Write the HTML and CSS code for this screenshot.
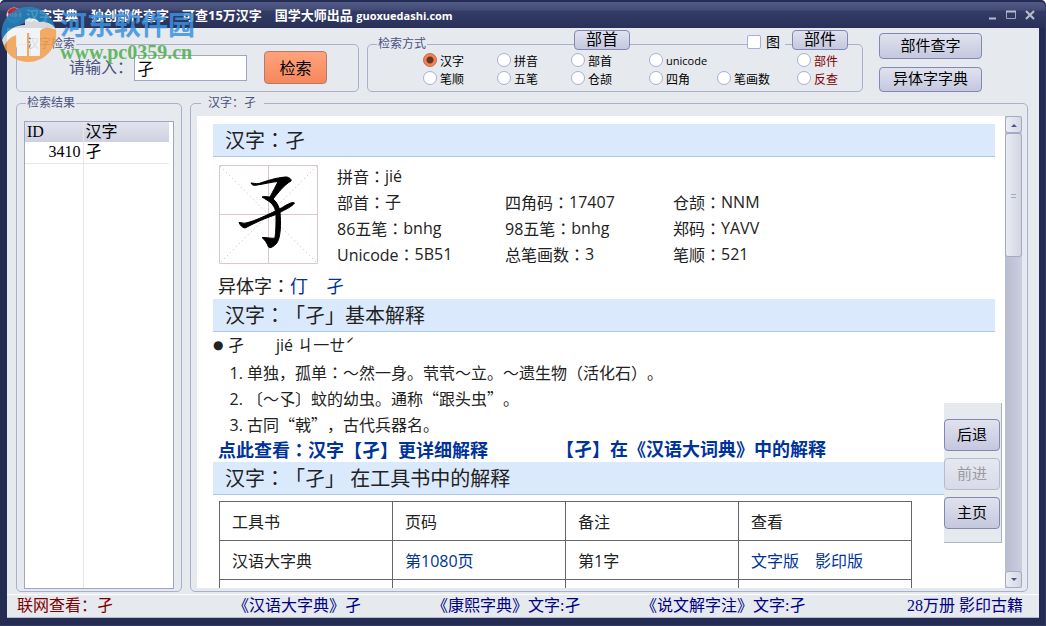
FILE: index.html
```
<!DOCTYPE html>
<html lang="zh-CN">
<head>
<meta charset="utf-8">
<title>汉字宝典</title>
<link rel="stylesheet" href="styles.css">
</head>
<body>
<div class="window">
  <header class="titlebar">
    <svg class="app-icon" viewBox="0 0 16 16"><circle cx="8" cy="8" r="7.5" fill="#d8dbe6"/><path d="M1.500 6a6.700 6.700 0 0 1 13 0z" fill="#d3202c"/><path d="M1.500 10a6.700 6.700 0 0 0 13 0z" fill="#3858a8"/><path d="M3 6v4h1.500l1-1v-2l-1-1zM7 6h2M7 8h2M7 10h2M10.500 6l3 4M13.500 6l-3 4" fill="none" stroke="#b31a2c" stroke-width="1.200"/></svg>
    <h1>汉字宝典　独创部件查字　可查15万汉字　国学大师出品 <span>guoxuedashi.com</span></h1>
    <div class="win-buttons">
      <button type="button" aria-label="最小化"><svg viewBox="0 0 12 12"><path d="M3 9.500h7" stroke="#b6bccf" stroke-width="2"/></svg></button>
      <button type="button" aria-label="最大化"><svg viewBox="0 0 12 12"><path d="M1.500 2.500h9v7h-9z" fill="none" stroke="#9da5bf"/><path d="M1 2.500h10" stroke="#b6bccf" stroke-width="2"/></svg></button>
      <button type="button" aria-label="关闭"><svg viewBox="0 0 12 12"><path d="M2 2l8 8M10 2l-8 8" stroke="#b6bccf" stroke-width="2.200"/></svg></button>
    </div>
  </header>

  <div class="client">
    <form class="toolbar">
      <fieldset class="group search">
        <legend>汉字检索</legend>
        <div class="search-row">
          <label for="q">请输入：</label>
          <input id="q" type="text" value="孑">
          <button type="button" class="primary">检索</button>
        </div>
      </fieldset>
      <fieldset class="group modes">
        <legend>检索方式</legend>
        <div class="mode-grid">
          <label><input type="radio" name="mode" checked>汉字</label>
          <label><input type="radio" name="mode">拼音</label>
          <label><input type="radio" name="mode">部首</label>
          <label class="span2 latin"><input type="radio" name="mode">unicode</label>
          <label class="red"><input type="radio" name="mode">部件</label>
          <label><input type="radio" name="mode">笔顺</label>
          <label><input type="radio" name="mode">五笔</label>
          <label><input type="radio" name="mode">仓颉</label>
          <label><input type="radio" name="mode">四角</label>
          <label><input type="radio" name="mode">笔画数</label>
          <label class="red"><input type="radio" name="mode">反查</label>
        </div>
        <button type="button" class="btn edge radical">部首</button>
        <label class="pic"><input type="checkbox">图</label>
        <button type="button" class="btn edge part">部件</button>
      </fieldset>
      <div class="side-buttons">
        <button type="button" class="btn">部件查字</button>
        <button type="button" class="btn">异体字字典</button>
      </div>
    </form>

    <main class="panes">
      <fieldset class="group results">
        <legend>检索结果</legend>
        <div class="list">
          <table>
            <thead><tr><th>ID</th><th>汉字</th></tr></thead>
            <tbody><tr><td>3410</td><td>孑</td></tr><tr class="rest"><td></td><td></td></tr></tbody>
          </table>
        </div>
      </fieldset>
      <fieldset class="group detail">
        <legend>汉字：孑</legend>
        <div class="browser">
          <article class="page">
            <h2>汉字<span class="mid">：</span>孑</h2>
            <section class="facts">
              <svg class="glyph" viewBox="0 0 99 99"><path d="M.5.5h98v98h-98zM49.500 0v99M0 49.500h99" fill="none" stroke="#d8c8ce"/><path d="M1 1l97 97M98 1l-97 97" stroke="#d8c8ce" stroke-dasharray="1.400 2.800"/><path class="ink" d="M32 18c1 2 2 2.500 5 2.200C45 19 53 17 59 16.500C57 21 54 26 51 32C49 32 45 31 43 32C46 34 50 36 52 38C54 40 56 43 56.500 46C48 50 36 56 27 58C24 58.800 22 57 20 57.500C21 60 23 62.500 26 63C29 62 31 60 34 59C42 55 50 52 57 49.500C57 58 57 66 56 73C53 74 47 72 43 72.500C46 75 48 78 49.500 82C51 84 55 81 57 79C62 74 62 57 61 47.500C65 45 73 42 75.500 38C73 36 66 41 60.500 44C59 40 57 36 54 34C59 28 65 20 72 16C73 14 69 11.500 66 12C58 12.500 47 16 40 18.500C37 19 34 18 32 18z"/></svg>
              <dl>
                <div class="wide"><dt>拼音<span class="mid">：</span></dt><dd>jié</dd></div>
                <div><dt>部首<span class="mid">：</span></dt><dd>子</dd></div>
                <div><dt>四角码<span class="mid">：</span></dt><dd>17407</dd></div>
                <div><dt>仓颉<span class="mid">：</span></dt><dd>NNM</dd></div>
                <div><dt>86五笔<span class="mid">：</span></dt><dd>bnhg</dd></div>
                <div><dt>98五笔<span class="mid">：</span></dt><dd>bnhg</dd></div>
                <div><dt>郑码<span class="mid">：</span></dt><dd>YAVV</dd></div>
                <div><dt>Unicode<span class="mid">：</span></dt><dd>5B51</dd></div>
                <div><dt>总笔画数<span class="mid">：</span></dt><dd>3</dd></div>
                <div><dt>笔顺<span class="mid">：</span></dt><dd>521</dd></div>
              </dl>
            </section>
            <p class="variants">异体字<span class="mid">：</span><a href="#">仃</a>　<a href="#">孑</a></p>
            <h2>汉字<span class="mid">：</span>「孑」基本解释</h2>
            <p class="reading"><span class="dot">●</span>孑　　jié ㄐ一ㄝˊ</p>
            <ol>
              <li>单独，孤单<span class="mid">：</span>～然一身。茕茕～立。～遗生物（活化石）。</li>
              <li>〔～孓〕蚊的幼虫。通称“跟头虫”。</li>
              <li>古同“戟”，古代兵器名。</li>
            </ol>
            <p class="more"><a href="#">点此查看<span class="mid">：</span>汉字【孑】更详细解释</a><a href="#">【孑】在《汉语大词典》中的解释</a></p>
            <h2>汉字<span class="mid">：</span>「孑」 在工具书中的解释</h2>
            <table class="books">
              <tr><td>工具书</td><td>页码</td><td>备注</td><td>查看</td></tr>
              <tr><td>汉语大字典</td><td><a href="#">第1080页</a></td><td>第1字</td><td><a href="#">文字版</a>　<a href="#">影印版</a></td></tr>
              <tr><td></td><td></td><td></td><td></td></tr>
            </table>
          </article>
          <nav class="history">
            <button type="button" class="btn">后退</button>
            <button type="button" class="btn" disabled>前进</button>
            <button type="button" class="btn">主页</button>
          </nav>
          <div class="scrollbar">
            <button type="button" aria-label="向上"><svg viewBox="0 0 8 4"><path d="M1 4l3-3l3 3z"/></svg></button>
            <div class="thumb"></div>
            <div class="track"></div>
            <button type="button" aria-label="向下"><svg viewBox="0 0 8 4"><path d="M1 0l3 3l3-3z"/></svg></button>
          </div>
        </div>
      </fieldset>
    </main>

    <footer class="status">
      <span class="online">联网查看：孑</span>
      <a href="#">《汉语大字典》孑</a>
      <a href="#">《康熙字典》文字:孑</a>
      <a href="#">《说文解字注》文字:孑</a>
      <a href="#" class="last">28万册 影印古籍</a>
    </footer>
  </div>

  <div class="watermark">
    <svg viewBox="0 0 56 56"><path d="M1 34C-2 17 8 3 24 1C38-1 51 8 55 24C48 17 43 15 38 16C32 11 27 12 24 17C13 20 5 27 1 34z" fill="#2585bd"/><path d="M55 24C57 40 46 55 28 56C15 56 6 49 3 40C4 32 9 25 15 23V50H24V26H28V50H38V24C40 19 49 18 55 24z" fill="#f3a14d"/><path d="M1 34C5 25 14 19 24 19V14C28 11 35 12 38 16C47 15 53 19 55 24C49 21 42 21 39 25V50H30V27H26V50H16V29C10 30 6 35 3 40z" fill="#f4f5f6"/></svg>
    <div class="mark-text"><strong>河东软件园</strong><span>www.pc0359.cn</span></div>
  </div>
</div>
</body>
</html>
```
FILE: styles.css
```
* { box-sizing: border-box; }

body {
  margin: 0;
  font-family: "Liberation Sans", "Noto Sans CJK SC", sans-serif;
  font-size: 12px;
  color: #000;
  text-spacing-trim: space-all;
}

button, input { font: inherit; color: inherit; margin: 0; }
a { color: inherit; text-decoration: none; }
h1, h2, p, dl, dd, ol { margin: 0; padding: 0; font-weight: normal; }

.window {
  position: relative;
  display: flex;
  flex-direction: column;
  height: 100vh;
  padding: 0 6px 7px 7px;
  background: #252c53;
  border: 1px solid #343b63;
  border-width: 0 1px 1px 0;
  border-radius: 5px 5px 0 0;
}

.titlebar {
  display: flex;
  align-items: center;
  gap: 4px;
  flex: none;
  height: 28px;
  margin: 0 -6px 0 -7px;
  padding: 0 9px 0 6px;
  border-top: 2px solid #252c53;
  border-radius: 5px 5px 0 0;
  background: linear-gradient(#525a87, #414974 32%, #343b65 34%, #2a3159);
  color: #fff;
}
.app-icon { width: 16px; height: 16px; }
.titlebar h1 {
  flex: 1;
  font-family: "Open Sans", "Noto Sans CJK SC", sans-serif;
  font-size: 13px;
  font-weight: bold;
  line-height: 24px;
  white-space: nowrap;
}
.titlebar h1 span { font-size: 11px; }
.win-buttons { display: flex; gap: 7px; }
.win-buttons button { width: 12px; height: 12px; padding: 0; border: 0; background: none; }
.win-buttons svg { display: block; width: 12px; height: 12px; }

.client {
  flex: 1;
  min-height: 0;
  display: flex;
  flex-direction: column;
  background: #e6e9ee;
}

.group {
  position: relative;
  min-width: 0;
  margin: 0;
  padding: 0;
  border: 1px solid #abafcb;
  border-radius: 5px;
}
.group legend {
  margin-left: 9px;
  padding: 0 1px;
  font-size: 12px;
  line-height: 14px;
  color: #4c5282;
}

.toolbar { display: flex; gap: 8px; flex: none; height: 64px; padding: 9px 57px 0 9px; }
.search { flex: 0 0 343px; }
.modes { flex: 1; }
.search-row { display: flex; align-items: center; padding-left: 52px; font-size: 16px; }
.search-row label { width: 65px; color: #4c5282; white-space: nowrap; line-height: 20px; }
.search-row input {
  width: 113px;
  height: 26px;
  padding: 0 2px;
  border: 1px solid #a0a5c3;
  background: #fff;
  font-size: 17px;
}
.search-row button { width: 63px; height: 33px; margin-left: 17px; padding: 0 0 2px; font-size: 16px; }
.primary {
  border: 1px solid #b17c70;
  border-radius: 4px;
  background: linear-gradient(#ffa37d, #f6875a);
}

.btn {
  padding: 0;
  border: 1px solid #8388b2;
  border-radius: 4px;
  background: linear-gradient(#e0e2ef, #c5c8de);
  font-size: 15px;
  line-height: 16px;
}
.btn:disabled { color: #9a9aa0; border-color: #b5b9d2; background: linear-gradient(#e6e8f0, #d8dae8); }

.mode-grid {
  display: grid;
  grid-template-columns: 74px 74px 78px 68px 80px auto;
  grid-auto-rows: 18px;
  padding: 0 0 0 55px;
}
.mode-grid label, .pic { display: flex; align-items: center; gap: 3px; white-space: nowrap; }
.mode-grid .span2 { grid-column: span 2; }
.mode-grid .latin { font-family: "Open Sans", sans-serif; font-size: 11px; }
.red { color: #800000; }
input[type="radio"] {
  appearance: none;
  width: 14px;
  height: 14px;
  border: 1px solid #a9afd0;
  border-radius: 50%;
  background: #fff;
}
input[type="radio"]:checked {
  border-color: #c9684a;
  background: radial-gradient(#6b3524 0 3px, #f08354 4px);
}
input[type="checkbox"] {
  appearance: none;
  width: 14px;
  height: 14px;
  border: 1px solid #a9afd0;
  border-radius: 2px;
  background: #fff;
}
.edge { position: absolute; width: 56px; height: 20px; top: -21px; font-size: 16px; }
.radical { left: 206px; }
.part { right: 14px; }
.pic { position: absolute; right: 77px; top: -19px; padding-right: 5px; gap: 5px; font-size: 14px; line-height: 20px; background: #e6e9ee; }

.side-buttons { display: flex; flex-direction: column; gap: 8px; flex: 0 0 103px; margin: -4px 0 0 8px; }
.side-buttons .btn { height: 26px; }

.panes { flex: 1; min-height: 0; display: flex; gap: 8px; padding: 4px 11px 2px 9px; }
.results { flex: 0 0 166px; padding: 11px 7px 2px; }
.results legend { margin-left: 2px; }
.detail { flex: 1; padding: 6px 5px 3px 6px; }
.detail legend { margin-left: 4px; padding: 0 8px 0 7px; }

.list { height: 100%; padding: 0 4px 0 0; border: 1px solid #a0a5c3; background: #fff; }
.list table { width: 100%; height: 100%; border-collapse: collapse; font: 16px/20px "Liberation Serif", "Noto Sans CJK SC", serif; }
.list th { height: 20px; padding: 0 2px; text-align: left; font-weight: normal; background: linear-gradient(#e1e2ec, #cfd1e2); }
.list td { height: 21px; padding: 0 2px; border-bottom: 1px solid #e5e7ea; }
.list th:first-child, .list td:first-child { width: 58px; border-right: 1px solid #e5e7ea; }
.list td:first-child { text-align: right; }
.list .rest td { height: auto; border-bottom: 0; }

.browser { position: relative; display: flex; height: 100%; background: #fff; }
.page {
  flex: 1;
  min-width: 0;
  overflow: hidden;
  padding: 8px 10px 0 16px;
  font-family: "Open Sans", "Noto Sans CJK SC", sans-serif;
  font-size: 16px;
  line-height: 26px;
  color: #222;
}
.page a { color: #039; }
.mid { font-family: "Noto Sans CJK JP", sans-serif; font-feature-settings: "locl" 0; }
.page h2 {
  height: 33px;
  padding-left: 12px;
  border-bottom: 1px solid #b0c8e8;
  background: #dbe9fd;
  font-size: 20px;
  line-height: 32px;
}
.facts { display: flex; gap: 19px; height: 115px; padding: 6px 0 0 6px; }
.glyph { flex: none; width: 99px; height: 99px; margin-top: 2px; }
.ink { stroke: #000; stroke-width: 1; }
.facts dl { display: grid; grid-template-columns: 168px 168px auto; grid-auto-rows: 26px; }
.facts dl div { display: flex; white-space: nowrap; }
.facts .wide { grid-column: 1 / -1; }
.variants { padding-left: 5px; font-size: 18px; }
.reading { display: flex; height: 27px; white-space: pre; }
.dot { width: 15px; font-family: "DejaVu Sans", sans-serif; font-size: 12px; }
.page ol { padding-left: 34px; font-family: "Noto Sans CJK SC", sans-serif; }
.page li { height: 26px; white-space: nowrap; }
.page li::marker { font-family: "Open Sans", sans-serif; }
.more { display: flex; gap: 68px; padding-left: 5px; font-size: 18px; font-weight: bold; line-height: 25px; height: 25px; white-space: nowrap; }
.books { width: 693px; margin: 6px 0 0 6px; border-collapse: collapse; table-layout: fixed; line-height: 24px; }
.books td { height: 39px; padding: 2px 12px 0; border: 1px solid #666; }

.history {
  position: absolute;
  right: 20px;
  bottom: 45px;
  display: flex;
  flex-direction: column;
  gap: 7px;
  padding: 16px 1px 13px 0;
  border: 1px solid #a9b4c0;
  border-width: 0 1px 1px 0;
  background: #e6e9ee;
}
.history .btn { width: 56px; height: 32px; }

.scrollbar { flex: 0 0 17px; display: flex; flex-direction: column; background: linear-gradient(90deg, #b9bccf, #cbcde0); }
.scrollbar button { display: grid; place-items: center; height: 17px; padding: 0; border: 1px solid #a6a9c3; border-radius: 3px; background: linear-gradient(90deg, #eceef4, #d5d7e4); }
.scrollbar svg { width: 8px; height: 4px; fill: #4c5282; }
.thumb {
  height: 124px;
  border: 1px solid #a6a9c3;
  border-radius: 3px;
  background: linear-gradient(#a6a9c3, #a6a9c3) center 60px / 5px 1px no-repeat, linear-gradient(#a6a9c3, #a6a9c3) center 63px / 5px 1px no-repeat, linear-gradient(90deg, #e9ebf3, #d3d5e2);
}
.track { flex: 1; }

.status {
  flex: none;
  display: grid;
  grid-template-columns: 216px 199px 209px 1fr auto;
  height: 24px;
  padding: 0 16px 0 10px;
  border-top: 1px solid #fff;
  border-bottom: 1px solid #b3bdc8;
  font-family: "Liberation Serif", "Noto Sans CJK SC", sans-serif;
  font-size: 16px;
  line-height: 22px;
  color: #000080;
  white-space: nowrap;
}
.online { color: #800000; }

.watermark { position: absolute; left: 1px; top: 6px; display: flex; gap: 3px; opacity: 0.85; pointer-events: none; }
.watermark svg { width: 56px; height: 56px; }
.mark-text { display: flex; flex-direction: column; padding-top: 2px; white-space: nowrap; }
.mark-text strong { font: bold 27px/32px "Noto Sans CJK SC", sans-serif; color: #3a93e0; }
.mark-text span { font: bold 20px/24px "Liberation Serif", serif; color: #4fae4c; }
```
